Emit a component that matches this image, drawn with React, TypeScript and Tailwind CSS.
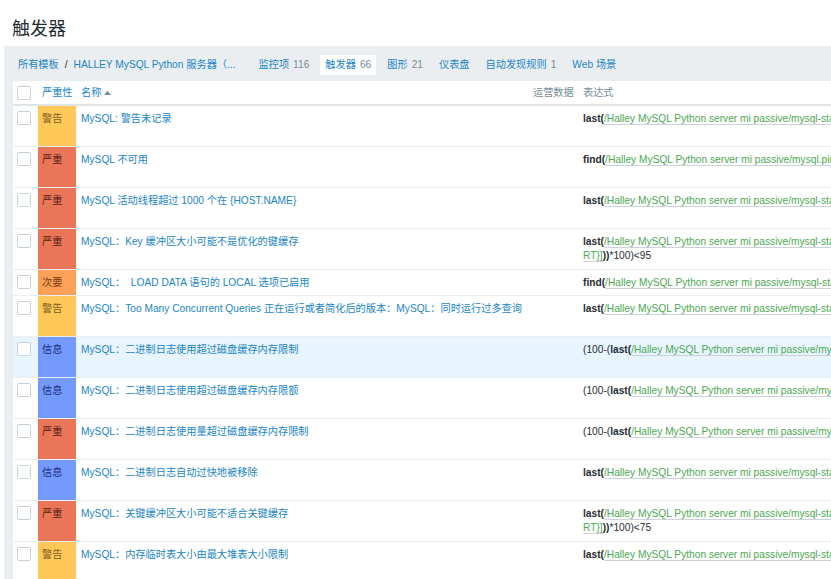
import React from "react"

type Sev = "warn" | "high" | "avg" | "info"

interface Trigger {
    sev: Sev;
    name: string;
    fn: string;
    prefix?: string;
    path: string;
    tail?: boolean;
    tailNum?: string;
    short?: boolean;
    selected?: boolean;
}

const sevStyles: Record<Sev, { label: string; cls: string }> = {
    warn: { label: "警告", cls: "bg-[#ffc859] text-[#7d5f1c]" },
    high: { label: "严重", cls: "bg-[#e97659] text-[#5c2416]" },
    avg: { label: "次要", cls: "bg-[#ffa059] text-[#743b12]" },
    info: { label: "信息", cls: "bg-[#7499ff] text-[#1c2f73]" },
}

const rows: Trigger[] = [
    { sev: "warn", name: "MySQL: 警告未记录", fn: "last", path: "/Halley MySQL Python server mi passive/mysql-status" },
    { sev: "high", name: "MySQL 不可用", fn: "find", path: "/Halley MySQL Python server mi passive/mysql.ping" },
    { sev: "high", name: "MySQL 活动线程超过 1000 个在 {HOST.NAME}", fn: "last", path: "/Halley MySQL Python server mi passive/mysql-status" },
    { sev: "high", name: "MySQL：Key 缓冲区大小可能不是优化的键缓存", fn: "last", path: "/Halley MySQL Python server mi passive/mysql-status", tail: true, tailNum: "*100)<95" },
    { sev: "avg", name: "MySQL：  LOAD DATA 语句的 LOCAL 选项已启用", fn: "find", path: "/Halley MySQL Python server mi passive/mysql-status", short: true },
    { sev: "warn", name: "MySQL：Too Many Concurrent Queries 正在运行或者简化后的版本：MySQL：同时运行过多查询", fn: "last", path: "/Halley MySQL Python server mi passive/mysql-status" },
    { sev: "info", name: "MySQL：二进制日志使用超过磁盘缓存内存限制", fn: "last", prefix: "(100-(", path: "/Halley MySQL Python server mi passive/mysql-status", selected: true },
    { sev: "info", name: "MySQL：二进制日志使用超过磁盘缓存内存限额", fn: "last", prefix: "(100-(", path: "/Halley MySQL Python server mi passive/mysql-status" },
    { sev: "high", name: "MySQL：二进制日志使用量超过磁盘缓存内存限制", fn: "last", prefix: "(100-(", path: "/Halley MySQL Python server mi passive/mysql-status" },
    { sev: "info", name: "MySQL：二进制日志自动过快地被移除", fn: "last", path: "/Halley MySQL Python server mi passive/mysql-status" },
    { sev: "high", name: "MySQL：关键缓冲区大小可能不适合关键缓存", fn: "last", path: "/Halley MySQL Python server mi passive/mysql-status", tail: true, tailNum: "*100)<75" },
    { sev: "warn", name: "MySQL：内存临时表大小由最大堆表大小限制", fn: "last", path: "/Halley MySQL Python server mi passive/mysql-status" },
]

const tabs = [
    { label: "监控项", count: "116" },
    { label: "触发器", count: "66", active: true },
    { label: "图形", count: "21" },
    { label: "仪表盘" },
    { label: "自动发现规则", count: "1" },
    { label: "Web 场景" },
]

function Checkbox() {
    return <span className="block w-[14px] h-[14px] rounded-[2px] border border-[#c9d2d8] bg-white" />
}

function Expression({ row }: { row: Trigger }) {
    return (
        <div className="leading-[14px] whitespace-nowrap text-[#1f2c33]">
            <div>
                {row.prefix}
                <b>{row.fn}(</b>
                <span className="text-[#4da851] border-b border-[#c9d3d9]">{row.path}</span>
            </div>
            {row.tail && (
                <div>
                    <span className="text-[#4da851] border-b border-[#c9d3d9]">{"RT}]"}</span>
                    <b>))</b>
                    {row.tailNum}
                </div>
            )}
        </div>
    )
}

export default function App() {
    return (
        <div className="w-[831px] h-[579px] overflow-hidden bg-white text-[10.2px] text-[#1f2c33] font-['Liberation_Sans','Noto_Sans_CJK_SC',sans-serif]">
            {/* Title */}
            <h1 className="h-[46px] pl-[12px] pt-[18px] text-[18px] leading-[22px] text-[#1f2c33]">触发器</h1>

            <div className="ml-[4px] bg-[#ebeef0] pl-[9px]">
                {/* Navigation */}
                <div className="h-[35px] flex items-center whitespace-nowrap text-[#1a85c8] -ml-[9px] pl-[14px] pt-[3px]">
                    <span>所有模板</span>
                    <span className="mx-[6px] text-[#1f2c33]">/</span>
                    <span>HALLEY MySQL Python 服务器（...</span>
                    <div className="flex items-center ml-[18px]">
                        {tabs.map((t) => (
                            <span
                                key={t.label}
                                className={
                                    "px-[5px] h-[20px] flex items-center mr-[6px] " +
                                    (t.active ? "bg-white" : "")
                                }
                            >
                                {t.label}
                                {t.count && <span className="ml-[4px] text-[#768d99]">{t.count}</span>}
                            </span>
                        ))}
                    </div>
                </div>

                {/* Table */}
                <div className="bg-white w-[900px]">
                    <div className="flex h-[25px] items-center border-b-2 border-[#dfe4e7] leading-[14px] whitespace-nowrap">
                        <div className="w-[25px] shrink-0 pl-[4px] pt-[1px]"><Checkbox /></div>
                        <div className="w-[38px] shrink-0 pl-[4px] text-[#1a85c8]">严重性</div>
                        <div className="w-[452px] shrink-0 pl-[5px] text-[#1a85c8] flex items-center">
                            名称
                            <svg width="7" height="5" viewBox="0 0 8 6" className="ml-[3px]">
                                <path d="M0 6 L4 1 L8 6 Z" fill="#768d99" />
                            </svg>
                        </div>
                        <div className="w-[50px] shrink-0 pl-[5px] text-[#768d99]">运营数据</div>
                        <div className="flex-1 min-w-0 pl-[5px] text-[#768d99]">表达式</div>
                    </div>

                    {rows.map((row, i) => {
                        const s = sevStyles[row.sev]
                        return (
                            <div
                                key={i}
                                className={
                                    "flex border-b border-[#ebeef0] leading-[14px] " +
                                    (row.short ? "h-[26px] " : "h-[41px] ") +
                                    (row.selected ? "bg-[#e8f5ff]" : "")
                                }
                            >
                                <div className="w-[25px] shrink-0 pl-[4px] pt-[5px]"><Checkbox /></div>
                                <div className={"w-[38px] shrink-0 pl-[4px] pt-[6px] " + s.cls}>{s.label}</div>
                                <div className="w-[452px] shrink-0 pl-[5px] pt-[6px] text-[#1a85c8] whitespace-pre">{row.name}</div>
                                <div className="w-[50px] shrink-0" />
                                <div className="flex-1 min-w-0 overflow-hidden pl-[5px] pt-[6px]">
                                    <Expression row={row} />
                                </div>
                            </div>
                        )
                    })}
                </div>
            </div>
        </div>
    )
}
